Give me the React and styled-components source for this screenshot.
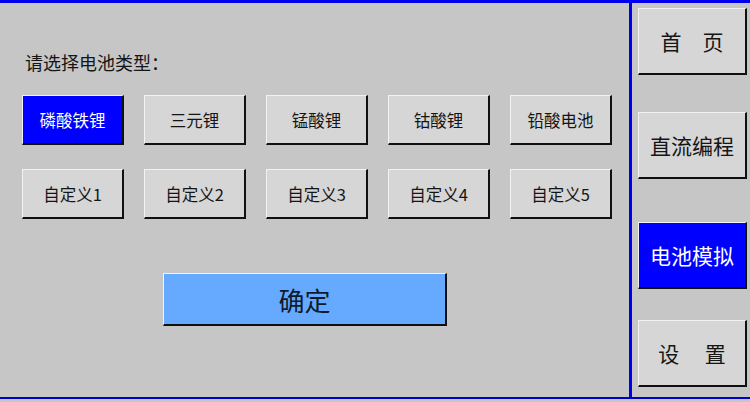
import React from 'react'
import styled, { createGlobalStyle } from 'styled-components'

const Global = createGlobalStyle`
  html, body {
    margin: 0;
    padding: 0;
    background: #c6c6c6;
  }
  body {
    font-family: "Noto Sans CJK SC", "Noto Sans", sans-serif;
  }
`

const Screen = styled.div`
  width: 750px;
  height: 399px;
  box-sizing: border-box;
  background: #c6c6c6;
  border-top: 3px solid #0000f0;
  border-bottom: 2px solid #0000c8;
  display: flex;
`

const Main = styled.div`
  width: 629px;
  box-sizing: border-box;
  padding: 48px 0 0 22px;
  display: flex;
  flex-direction: column;
`

const Label = styled.div`
  font-size: 18px;
  line-height: 22px;
  color: #151515;
  margin-left: 3px;
`

const TypeGrid = styled.div`
  margin-top: 22px;
  display: grid;
  grid-template-columns: repeat(5, 102px);
  grid-auto-rows: 50px;
  column-gap: 20px;
  row-gap: 24px;
`

const Bevel = styled.button`
  box-sizing: border-box;
  margin: 0;
  padding: 0;
  font-family: inherit;
  border-style: solid;
  border-width: 1px 2px 2px 1px;
  border-color: #f2f2f2 #101010 #101010 #f2f2f2;
  background: ${p => (p.$active ? '#0000ff' : '#d6d6d6')};
  color: ${p => (p.$active ? '#ffffff' : '#151515')};
  display: flex;
  align-items: center;
  justify-content: center;
  cursor: pointer;
`

const TypeButton = styled(Bevel)`
  font-size: 16.5px;
`

const Confirm = styled(Bevel)`
  width: 284px;
  height: 53px;
  margin: 54px 0 0 141px;
  background: #66aaff;
  color: #0e1a2e;
  font-size: 26px;
`

const Side = styled.div`
  flex: 1;
  border-left: 3px solid #0000f0;
  box-sizing: border-box;
  padding: 5px 0 0 6px;
  display: flex;
  flex-direction: column;
`

const NavButton = styled(Bevel)`
  width: 109px;
  height: 67px;
  margin-top: ${p => p.$gap}px;
  font-size: 21px;
  white-space: pre;
`

const types = ['磷酸铁锂', '三元锂', '锰酸锂', '钴酸锂', '铅酸电池', '自定义1', '自定义2', '自定义3', '自定义4', '自定义5']

const nav = [
  { label: '首\u3000页', gap: 0 },
  { label: '直流编程', gap: 37 },
  { label: '电池模拟', gap: 43, active: true },
  { label: '设\u3000 置', gap: 31 },
]

export default function App() {
  return (
    <>
      <Global />
      <Screen>
        <Main>
          <Label>请选择电池类型：</Label>
          <TypeGrid>
            {types.map((t, i) => (
              <TypeButton key={t} $active={i === 0}>{t}</TypeButton>
            ))}
          </TypeGrid>
          <Confirm>确定</Confirm>
        </Main>
        <Side>
          {nav.map(n => (
            <NavButton key={n.label} $gap={n.gap} $active={n.active}>{n.label}</NavButton>
          ))}
        </Side>
      </Screen>
    </>
  )
}
